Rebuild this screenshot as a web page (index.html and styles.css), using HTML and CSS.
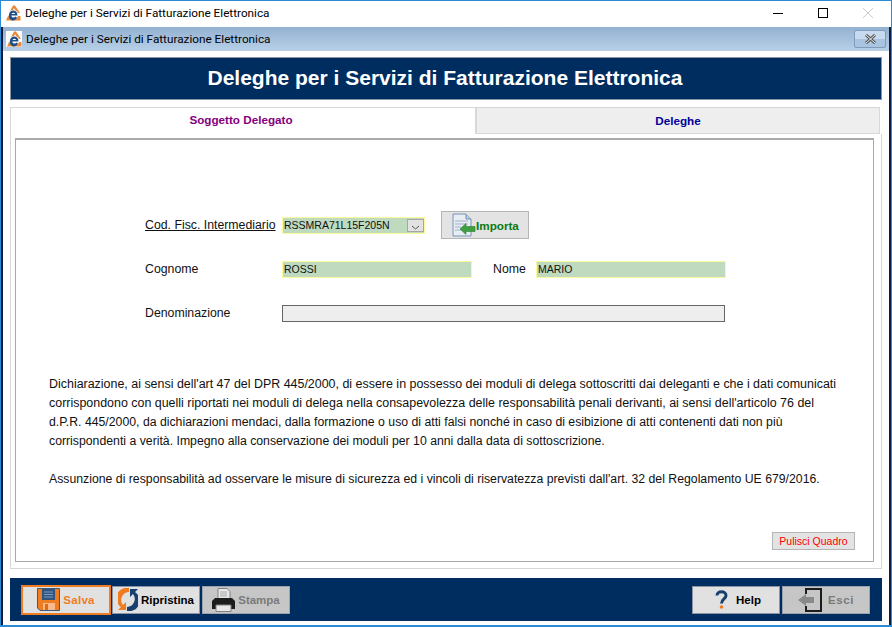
FILE: index.html
```html
<!DOCTYPE html>
<html lang="it">
<head>
<meta charset="UTF-8">
<title>Deleghe per i Servizi di Fatturazione Elettronica</title>
<link rel="stylesheet" href="styles.css">
</head>
<body>
<svg width="0" height="0" class="defs">
	<symbol id="logo" viewBox="0 0 16 16">
		<path d="M4 8 L8 0.5 H10 L15 8 Z" fill="#e8873a"/>
		<path d="M7.5 6 L9 3 L10.5 6 Z" fill="#fff"/>
		<path d="M1 15.5 L3 11 H15.5 V15.5 Z" fill="#e8873a"/>
		<circle cx="8.2" cy="9.8" r="4.9" fill="#fff"/>
		<path d="M4 9.8 A4.2 4.2 0 0 1 12.4 9.8 V10.5 H6.2 A2.4 2.4 0 0 0 10.4 11.6 L12 12.6 A4.2 4.2 0 0 1 4 9.8 Z M6.4 9 H10.2 A2.1 2.1 0 0 0 6.4 9 Z" fill="#1f4f86" fill-rule="evenodd"/>
	</symbol>
</svg>
<div class="window">
	<header class="titlebar">
		<svg class="logo"><use href="#logo"/></svg>
		<span class="title">Deleghe per i Servizi di Fatturazione Elettronica</span>
		<div class="controls">
			<svg width="12" height="12" viewBox="0 0 12 12"><path d="M1 6.5 H11" stroke="#000" fill="none"/></svg>
			<svg width="12" height="12" viewBox="0 0 12 12"><rect x="1.5" y="1.5" width="9" height="9" stroke="#000" fill="none"/></svg>
			<svg width="12" height="12" viewBox="0 0 12 12"><path d="M1 1 L11 11 M11 1 L1 11" stroke="#ccc" fill="none"/></svg>
		</div>
	</header>
	<div class="inner">
		<div class="innerbar">
			<svg class="logo logo-box"><use href="#logo"/></svg>
			<span class="title">Deleghe per i Servizi di Fatturazione Elettronica</span>
			<button class="closebtn">
				<svg width="13" height="10" viewBox="0 0 13 10"><path d="M2 1 L11 9 M11 1 L2 9" stroke="#555" stroke-width="3" fill="none"/><path d="M2 1 L11 9 M11 1 L2 9" stroke="#eee" stroke-width="1" fill="none"/></svg>
			</button>
		</div>
		<div class="body">
			<h1 class="banner">Deleghe per i Servizi di Fatturazione Elettronica</h1>
			<div class="tabs">
				<div class="tab active">Soggetto Delegato</div>
				<div class="tab">Deleghe</div>
			</div>
			<div class="tabpanel">
				<div class="panel">
					<div class="form">
						<div class="row row-cf">
							<label class="lbl lbl-u">Cod. Fisc. Intermediario</label>
							<div class="field field-cf">RSSMRA71L15F205N
								<span class="drop"><svg width="9" height="5" viewBox="0 0 9 5"><path d="M1 1 L4.5 4 L8 1" stroke="#555" fill="none"/></svg></span>
							</div>
							<button class="btn-import">
								<svg width="24" height="24" viewBox="0 0 24 24">
									<path d="M1 1 H14 L19 6 V23 H1 Z" fill="#e8edf4" stroke="#7692b4"/>
									<path d="M14 1 V6 H19" fill="#b9cde2" stroke="#7692b4"/>
									<path d="M3 8 H16 M3 11 H16 M3 14 H9 M3 17 H9" stroke="#c3cfdc" stroke-width="2"/>
									<path d="M8 16 L14 10.5 V13.5 H23 V18.5 H14 V21.5 Z" fill="#3ea043" stroke="#2d7c33" stroke-width=".6"/>
								</svg>
								<span>Importa</span>
							</button>
						</div>
						<div class="row row-name">
							<label class="lbl">Cognome</label>
							<div class="field field-cognome">ROSSI</div>
							<label class="lbl lbl-nome">Nome</label>
							<div class="field field-nome">MARIO</div>
						</div>
						<div class="row row-den">
							<label class="lbl">Denominazione</label>
							<div class="field-off"></div>
						</div>
					</div>
					<div class="note">
						<p>Dichiarazione, ai sensi dell'art 47 del DPR 445/2000, di essere in possesso dei moduli di delega sottoscritti dai deleganti e che i dati comunicati<br>corrispondono con quelli riportati nei moduli di delega nella consapevolezza delle responsabilità penali derivanti, ai sensi dell'articolo 76 del<br><span class="tight">d.P.R. 445/2000, da dichiarazioni mendaci, dalla formazione o uso di atti falsi nonché in caso di esibizione di atti contenenti dati non più<br>corrispondenti a verità. Impegno alla conservazione dei moduli per 10 anni dalla data di sottoscrizione.</span></p>
						<p class="tight">Assunzione di responsabilità ad osservare le misure di sicurezza ed i vincoli di riservatezza previsti dall'art. 32 del Regolamento UE 679/2016.</p>
					</div>
					<div class="clear-wrap"><button class="btn-clear">Pulisci Quadro</button></div>
				</div>
			</div>
			<footer class="toolbar">
				<button class="tbtn tbtn-save">
					<svg width="23" height="23" viewBox="0 0 23 23">
						<path d="M0.5 0.5 H22.5 V22.5 H3 L0.5 20 Z" fill="#f07c22" stroke="#3f5a78"/>
						<rect x="5" y="1" width="13" height="11" fill="#2f5480"/>
						<path d="M7 4 H16 M7 6.5 H16 M7 9 H16" stroke="#7f9bbd"/>
						<rect x="6" y="15" width="12" height="7" fill="#f9b98a"/>
						<rect x="8" y="16" width="3" height="6" fill="#e06a12"/>
					</svg>
					<span>Salva</span>
				</button>
				<button class="tbtn tbtn-rip">
					<svg width="20" height="23" viewBox="0 0 20 23">
						<path d="M11 0 V4 A8 8 0 0 0 5 17 L8 14 V22 H0 L3 19 A10.5 10.5 0 0 1 11 0 Z" fill="#f07c22"/>
						<path d="M9 23 V19 A8 8 0 0 0 15 6 L12 9 V1 H20 L17 4 A10.5 10.5 0 0 1 9 23 Z" fill="#173f70"/>
					</svg>
					<span>Ripristina</span>
				</button>
				<button class="tbtn tbtn-off tbtn-print">
					<svg width="23" height="24" viewBox="0 0 23 24">
						<path d="M6 0.5 H15 L18 3.5 V11 H6 Z" fill="#e8e8e8" stroke="#808080"/>
						<path d="M8 4 H15 M8 6 H15 M8 8 H15" stroke="#a8a8a8"/>
						<path d="M3 10 H20 L23 13 V21 H0 V13 Z" fill="#1c1c1c"/>
						<path d="M4 17 H19 V23.5 H4 Z" fill="#e8e8e8" stroke="#808080"/>
					</svg>
					<span>Stampa</span>
				</button>
				<div class="spacer"></div>
				<button class="tbtn tbtn-help">
					<svg width="13" height="19" viewBox="0 0 13 19">
						<path d="M2 5.5 C2 0.5 11 0.5 11 5.5 C11 9 6.5 9 6.5 13.5" fill="none" stroke="#173f70" stroke-width="3"/>
						<circle cx="6.5" cy="17" r="1.8" fill="#f07c22"/>
					</svg>
					<span>Help</span>
				</button>
				<button class="tbtn tbtn-off tbtn-esci">
					<svg width="24" height="24" viewBox="0 0 24 24">
						<path d="M8 6 V1 H23 V23 H8 V18" fill="none" stroke="#1c1c1c" stroke-width="2"/>
						<path d="M0 12 L8 6 V9 H16 V15 H8 V18 Z" fill="#8a8a8a"/>
					</svg>
					<span>Esci</span>
				</button>
			</footer>
		</div>
	</div>
</div>
</body>
</html>
```
FILE: styles.css
```css
* { box-sizing: border-box; }
html, body { margin: 0; padding: 0; }
body { width: 892px; height: 627px; overflow: hidden; background: #fff; font-family: "Liberation Sans", Arial, sans-serif; font-size: 12px; color: #111; }
.defs { position: absolute; }
button { font-family: inherit; padding: 0; cursor: default; }

.window { height: 627px; display: flex; flex-direction: column; border: 1px solid #2a8ad4; border-width: 1px 1px 2px 1px; }
.titlebar { height: 26px; flex: none; display: flex; align-items: center; padding: 0 0 2px 4px; background: #fff; }
.titlebar .title { margin-left: 4px; font-family: Roboto, sans-serif; font-size: 11.75px; color: #000; }
.logo { width: 16px; height: 16px; flex: none; }
.logo-box { background: #fff; }
.controls { margin-left: auto; display: flex; gap: 33px; padding-right: 17px; }
.controls svg { display: block; }

.inner { flex: 1; display: flex; flex-direction: column; border-left: 2px solid #111c3a; border-right: 2px solid #111c3a; }
.innerbar { height: 24px; flex: none; display: flex; align-items: center; padding-left: 3px; background: linear-gradient(#93b1d1, #b8d0e8); }
.innerbar .title { margin-left: 4px; font-family: Roboto, sans-serif; font-size: 11.75px; color: #000; }
.closebtn { margin-left: auto; margin-right: 3px; width: 32px; height: 18px; display: flex; align-items: center; justify-content: center; background: linear-gradient(#c7daef 50%, #a9c4e0 50%); border: 1px solid #7f9bbb; border-radius: 2px; }

.body { flex: 1; display: flex; flex-direction: column; padding: 6px 7px 4px 7px; background: #fff; }
.banner { height: 43px; flex: none; margin: 0; padding: 0 2px 2px 0; display: flex; align-items: center; justify-content: center; background: #002d5f; border: 1px solid #8a96a6; color: #fff; font-size: 21px; font-weight: bold; }

.tabs { display: flex; margin-top: 7px; margin-right: 2px; height: 27px; flex: none; font-size: 11.7px; font-weight: bold; }
.tab { flex: 1; display: flex; align-items: center; justify-content: center; background: #eee; border: 1px solid #d8d8d8; color: #00009c; }
.tab.active { flex: none; width: 466px; background: #fff; border-bottom: none; color: #84007e; padding: 0 4px 4px 0; }
.tabpanel { flex: none; height: 435px; padding: 4px 7px 6px 4px; background: #fff; border: 1px solid #d8d8d8; border-top: none; }
.panel { height: 100%; display: flex; flex-direction: column; border: 1px solid #a9a9a9; border-top-width: 2px; }

.form { padding: 76px 0 0 129px; font-size: 12.3px; }
.row { display: flex; align-items: center; height: 18px; }
.row-name { margin-top: 26px; }
.row-den { margin-top: 26px; }
.lbl { width: 137px; color: #111; }
.lbl-u { text-decoration: underline; }
.lbl-nome { width: 34px; margin: 0 9px 0 21px; }
.field { height: 17px; display: flex; align-items: center; padding-left: 1px; background: #bfdabf; border: 1px solid #fbfb9c; font-size: 10.5px; color: #111; }
.field-cf { width: 143px; margin-right: 16px; position: relative; }
.drop { position: absolute; right: 0; top: 1px; width: 17px; height: 13px; display: flex; align-items: flex-end; justify-content: center; padding-bottom: 1px; background: #e2e2e2; border: 1px solid #a6a6a6; }
.field-cognome { width: 190px; }
.field-nome { width: 190px; }
.field-off { width: 443px; height: 17px; background: #eee; border: 1px solid #666; }
.btn-import { flex: none; width: 88px; height: 28px; display: flex; align-items: center; padding-left: 10px; background: #e3e3e3; border: 1px solid #b5b5b5; font-size: 11.7px; font-weight: bold; color: #0a7a12; }

.note { margin-top: 53px; padding-left: 33px; font-size: 12.44px; line-height: 19px; color: #111; }
.note p { margin: 0 0 19px 0; }
.tight { font-size: 12.28px; }
.clear-wrap { margin-top: auto; padding: 0 18px 11px 0; display: flex; justify-content: flex-end; }
.btn-clear { width: 83px; height: 18px; background: #e3e3e3; border: 1px solid #b5b5b5; color: #f00; font-size: 10.5px; }

.toolbar { flex: none; height: 43px; margin-top: 9px; display: flex; align-items: center; gap: 1px; padding: 0 12px 0 11px; background: #002d5f; }
.spacer { flex: 1; }
.tbtn { height: 28px; display: flex; align-items: center; justify-content: center; gap: 3px; background: #e1e1e1; border: 1px solid #8a96a6; font-size: 11.5px; font-weight: bold; color: #000; }
.tbtn-off { background: #c6c6c6; color: #7a7a7a; border-color: #9aa3ae; }
.tbtn-save { width: 90px; height: 30px; border: 2px solid #f07c22; color: #f07c22; letter-spacing: .3px; }
.tbtn-rip { width: 88px; }
.tbtn-print { width: 88px; margin-left: 1px; }
.tbtn-help { width: 88px; gap: 8px; padding-left: 4px; }
.tbtn-esci { width: 88px; margin-left: 1px; letter-spacing: .6px; gap: 6px; }
```
